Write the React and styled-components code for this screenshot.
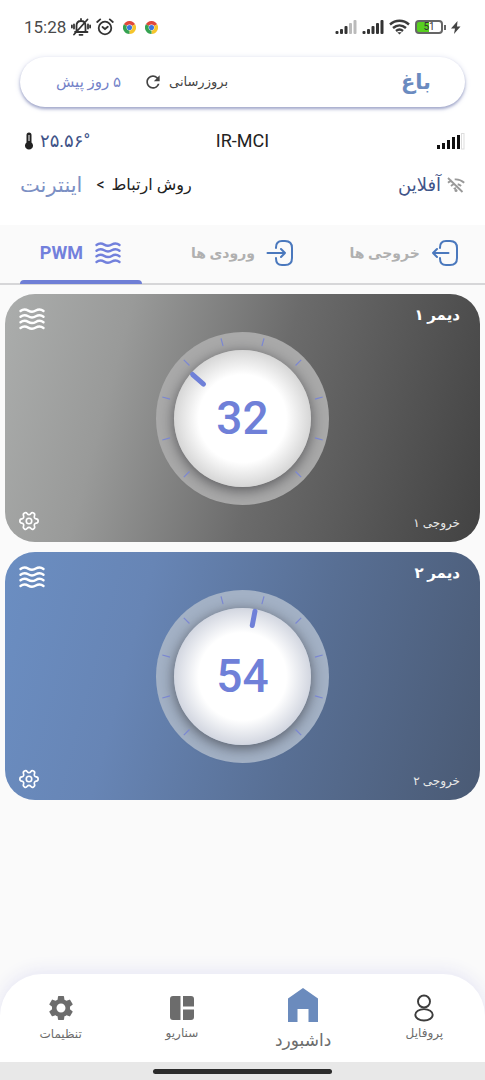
import React, { useState } from "react";
import styled, { createGlobalStyle, css } from "styled-components";
import { MdRefresh, MdSettings } from "react-icons/md";
import { Settings } from "lucide-react";

const GlobalStyle = createGlobalStyle`
  *, *::before, *::after { box-sizing: border-box; }
  body {
    margin: 0;
    background: #fafafa;
    color: #222;
    font-family: Roboto, "DejaVu Sans", sans-serif;
  }
  button { font: inherit; color: inherit; background: none; border: 0; padding: 0; cursor: pointer; }
  a { color: inherit; text-decoration: none; }
  h1, h2, p { margin: 0; font-weight: inherit; }
  svg { display: block; flex: none; }
`;

const Screen = styled.div`
  direction: rtl;
  display: flex;
  flex-direction: column;
  min-height: 100vh;
`;

const Top = styled.header`
  background: #fff;
  padding: 0 20px 30px;
`;

const StatusBar = styled.div`
  direction: ltr;
  display: flex;
  align-items: center;
  justify-content: space-between;
  height: 54px;
  padding: 0 4px;
  color: #4a4a4a;
`;

const StatusGroup = styled.div`
  display: flex;
  align-items: center;
  gap: ${(p) => p.$gap}px;
`;

const Clock = styled.time`
  font-size: 17px;
  line-height: 20px;
`;

const DevicePill = styled.section`
  display: flex;
  align-items: center;
  justify-content: space-between;
  height: 50px;
  margin-top: 3px;
  padding: 0 34px 0 36px;
  border-radius: 25px;
  background: #fff;
  box-shadow: 0 2px 3px #a4aacb, 0 1px 6px #dcdfee;
`;

const DeviceName = styled.h1`
  color: #6b8bc0;
  font-size: 21px;
  line-height: 32px;
  font-weight: 700;
`;

const Update = styled.div`
  display: flex;
  align-items: center;
  gap: 22px;
  line-height: 24px;
`;

const UpdateButton = styled.button`
  display: flex;
  align-items: center;
  gap: 6px;
  font-size: 13px;
  color: #444;
`;

const UpdateAge = styled.span`
  font-size: 15px;
  color: #7482c8;
`;

const InfoRow = styled.div`
  direction: ltr;
  display: grid;
  grid-template-columns: 1fr auto 1fr;
  align-items: center;
  height: ${(p) => p.$height}px;
  font-size: 18px;
  line-height: 20px;
  > :last-child { justify-self: end; }
`;

const Inline = styled.div`
  display: flex;
  align-items: center;
  gap: 6px;
  padding-left: 4px;
  color: #3f5488;
`;

const Method = styled.button`
  direction: rtl;
  justify-self: start;
  display: flex;
  align-items: center;
  gap: 7px;
  font-size: 16px;
  white-space: nowrap;
`;

const MethodValue = styled.strong`
  margin-right: 7px;
  font-size: 21px;
  font-weight: 400;
  color: #7c90c4;
`;

const Tabs = styled.div`
  display: grid;
  grid-template-columns: repeat(3, 1fr);
  height: 60px;
  border-bottom: 2px solid #d6d6d8;
`;

const Tab = styled.button`
  position: relative;
  display: flex;
  align-items: center;
  justify-content: center;
  gap: 11px;
  padding-bottom: 2px;
  font-size: ${(p) => (p.$latin ? 18 : 14)}px;
  line-height: 24px;
  font-weight: 700;
  color: ${(p) => (p.$active ? "#7280dc" : "#b0b0b0")};
  ${(p) =>
    p.$active &&
    css`
      &::after {
        content: "";
        position: absolute;
        left: 20px;
        right: 20px;
        bottom: -1px;
        height: 4px;
        border-radius: 4px 4px 0 0;
        background: #6f7fd6;
      }
    `}
`;

const Cards = styled.main`
  flex: 1;
  display: flex;
  flex-direction: column;
  gap: 10px;
  padding: 9px 5px 20px;
`;

const themes = {
  grey: { card: "#abadac, #999a99 24%, #6b6b6b 55%, #424242", ring: "#a9a9a9", edge: "#d6d6d6" },
  blue: { card: "#6b8ec2, #6785b5 28%, #586f94 62%, #4a5a74", ring: "#a3b1c5", edge: "#d2d6e0" },
};

const Card = styled.article`
  display: grid;
  grid-template-columns: 1fr auto 1fr;
  grid-template-rows: 1fr auto;
  height: 248px;
  padding: 10px 13px;
  border-radius: 30px;
  color: #fff;
  background: linear-gradient(105deg, ${(p) => themes[p.$tone].card});
`;

const CardTitle = styled.h2`
  padding-right: 7px;
  font-size: 15px;
  line-height: 22px;
  font-weight: 700;
`;

const CardOutput = styled.p`
  grid-row: 2;
  grid-column: 1;
  align-self: end;
  padding-right: 7px;
  font-size: 12px;
  line-height: 18px;
  color: #e9e9e9;
`;

const CardKind = styled.span`
  grid-column: 3;
  grid-row: 1;
  justify-self: end;
  padding-top: 1px;
`;

const CardSettings = styled.button`
  grid-column: 3;
  grid-row: 2;
  justify-self: end;
  align-self: end;
`;

const DialBox = styled.div`
  grid-column: 2;
  grid-row: 1 / 3;
  align-self: center;
  position: relative;
  display: grid;
  place-items: center;
  width: 173px;
  height: 173px;
  border-radius: 50%;
  background: ${(p) => themes[p.$tone].ring};
  direction: ltr;
`;

const Knob = styled.div`
  display: grid;
  place-items: center;
  width: 137px;
  height: 137px;
  border-radius: 50%;
  background: radial-gradient(closest-side, #fff 64%, ${(p) => themes[p.$tone].edge} 100%);
  box-shadow: 0 3px 14px rgba(30, 30, 35, 0.6);
`;

const Reading = styled.output`
  font-family: Roboto, sans-serif;
  font-size: 46px;
  line-height: 60px;
  font-weight: 500;
  color: #6f80d8;
`;

const DialMarks = styled.svg`
  position: absolute;
  inset: 0;
`;

const DialRange = styled.input`
  position: absolute;
  inset: 0;
  width: 100%;
  height: 100%;
  margin: 0;
  opacity: 0;
  cursor: pointer;
`;

const BottomNav = styled.nav`
  display: grid;
  grid-template-columns: repeat(4, 1fr);
  height: 88px;
  border-radius: 42px 42px 0 0;
  background: #fff;
  box-shadow: 0 -2px 18px #e4e4f4;
`;

const NavLink = styled.a`
  display: flex;
  flex-direction: column;
  align-items: center;
  justify-content: center;
  gap: ${(p) => (p.$active ? 6 : 2)}px;
  padding-top: ${(p) => (p.$active ? 3 : 0)}px;
  font-size: ${(p) => (p.$active ? 17 : 12)}px;
  line-height: ${(p) => (p.$active ? 24 : 18)}px;
  color: #6c6c6c;
`;

const GestureArea = styled.footer`
  display: flex;
  align-items: center;
  justify-content: center;
  height: 18px;
  background: #e8e8e8;
  z-index: 1;
`;

const GestureBar = styled.span`
  width: 37%;
  height: 5px;
  border-radius: 3px;
  background: #2c2c2c;
`;

const Waves = () => (
  <svg width="28" height="28" viewBox="0 0 28 28" fill="none" stroke="currentColor" strokeWidth="2.4" strokeLinecap="round">
    {[6, 11.7, 17.3, 23].map((y) => (
      <path key={y} d={`M2.5 ${y}c2.6-2 5-2 7.7-.4 2.6 1.6 5 1.6 7.6 0 2.7-1.6 5.1-1.6 7.7.4`} />
    ))}
  </svg>
);

const OutputIcon = () => (
  <svg width="28" height="28" viewBox="0 0 28 28" fill="none" stroke="#4a78bd" strokeWidth="2" strokeLinecap="round" strokeLinejoin="round">
    <path d="M9 9V8.500C9 4 11 2 15 2h4c5 0 7 2.500 7 7v10c0 4.500-2 7-7 7h-4c-4 0-6-2-6-6.500V19M17.500 14H2M6 10l-4 4 4 4" />
  </svg>
);

const InputIcon = () => (
  <svg width="28" height="28" viewBox="0 0 28 28" fill="none" stroke="#4a78bd" strokeWidth="2" strokeLinecap="round" strokeLinejoin="round">
    <path d="M10 9v-.5C10 4 12 2 16 2h3c5 0 7 2.500 7 7v10c0 4.500-2 7-7 7h-3c-4 0-6-2-6-6.500V19M1.500 14H19M15 10l4 4-4 4" />
  </svg>
);

const MutedBell = () => (
  <svg width="20" height="18" viewBox="0 0 20 18" fill="none" stroke="#333" strokeWidth="1.8" strokeLinecap="round">
    <path d="M4 14h12.500M5.500 13V8c0-3 1.800-5 4.500-5s4.500 2 4.500 5v5M10 1v1.500M3 16.500 16.500 1.500M8.500 16.800h3M3 6.500v4M.9 7.500v2M17 6.500v4M19.100 7.500v2" />
  </svg>
);

const Alarm = () => (
  <svg width="18" height="18" viewBox="0 0 18 18" fill="none" stroke="#333" strokeWidth="1.8" strokeLinecap="round">
    <circle cx="9" cy="10" r="6.3" />
    <path d="m1.200 4 3-2.600M16.800 4l-3-2.600M6.500 9l2.500 2 2.800-2.200" />
  </svg>
);

const Chrome = () => (
  <svg width="13" height="13" viewBox="0 0 24 24">
    <path d="M12 12 1.600 6A12 12 0 0 1 22.400 6z" fill="#e0483b" />
    <path d="M12 12 22.400 6A12 12 0 0 1 12 24z" fill="#f5c52c" />
    <path d="M12 12v12A12 12 0 0 1 1.600 6z" fill="#35a251" />
    <circle cx="12" cy="12" r="5.4" fill="#fff" />
    <circle cx="12" cy="12" r="4.7" fill="#3a75e0" />
  </svg>
);

const PhoneSignal = ({ level }) => (
  <svg width="22" height="14" viewBox="0 0 22 14">
    {[3, 5, 8, 11, 14].map((h, i) => (
      <rect key={h} x={i * 4.5 + 0.5} y={14 - h} width="3" height={h} rx="1" fill={i < level ? "#333" : "#bbb"} />
    ))}
  </svg>
);

const Wifi = () => (
  <svg width="21" height="16" viewBox="0 0 21 16" fill="none" stroke="#3c3c3c" strokeWidth="2.4">
    <path d="M1 5.500c5.500-5 13.500-5 19 0M4 9c4-3.500 9-3.500 13 0M7 12c2.200-1.800 4.800-1.800 7 0" />
    <path d="m10.500 15.500-2.200-2.300h4.400z" fill="#3c3c3c" stroke="none" />
  </svg>
);

const Battery = styled.span`
  display: flex;
  align-items: center;
  justify-content: center;
  width: 28px;
  height: 14px;
  border: 2px solid #666;
  border-radius: 4px;
  background: linear-gradient(90deg, #58d020 52%, #fff 52%);
  font-size: 10px;
  line-height: 10px;
  color: #333;
`;

const BatteryTip = styled.span`
  width: 2px;
  height: 5px;
  background: #666;
`;

const Bolt = () => (
  <svg width="10" height="13" viewBox="0 0 10 13">
    <path d="M6.500 0 0 7.500h4L3 13l6.500-7.500H6z" fill="#444" />
  </svg>
);

const Thermometer = () => (
  <svg width="10" height="18" viewBox="0 0 10 18">
    <path d="M2.500 3a2.500 2.500 0 0 1 5 0v7.500a4 4 0 1 1-5 0z" fill="#222" />
    <path d="M5 3v6" stroke="#ccc" strokeWidth="1.3" />
  </svg>
);

const ModemSignal = () => (
  <svg width="28" height="18" viewBox="0 0 28 18">
    {[4, 6, 9, 12, 14].map((h, i) => (
      <rect key={h} x={i * 5} y={17 - h} width="3" height={h} fill="#111" />
    ))}
    <rect x="24.500" y="1.500" width="2.500" height="15.500" fill="#fff" stroke="#ddd" />
  </svg>
);

const Offline = () => (
  <svg width="18" height="16" viewBox="0 0 18 16" fill="none" stroke="#999" strokeWidth="1.9">
    <path d="M1 1l14.500 14M1 5.700c1.200-1 2.400-1.700 3.700-2.200M7.700 2.400c3.500-.3 6.700.8 9.500 3.300M4 9c1-.9 2.100-1.500 3.300-1.800M10.700 7.200c1.300.3 2.400.9 3.400 1.800M6.800 12c.8-.6 1.500-.8 2.300-.8" />
    <circle cx="9" cy="13.5" r="1.5" fill="#999" stroke="none" />
  </svg>
);

const ScenarioIcon = () => (
  <svg width="24" height="28" viewBox="0 0 24 28" fill="currentColor">
    <path d="M3 2h7.500v24H3a3 3 0 0 1-3-3V5a3 3 0 0 1 3-3zM13 2h8a3 3 0 0 1 3 3v7.500H13zM13 15.500h11V23a3 3 0 0 1-3 3h-8z" />
  </svg>
);

const HomeIcon = () => (
  <svg width="32" height="34" viewBox="0 0 32 34">
    <path d="M16 0 31 10.500V34H21.500V21h-11v13H1V10.500z" fill="#6b8bbd" />
  </svg>
);

const ProfileIcon = () => (
  <svg width="20" height="28" viewBox="0 0 20 28" fill="none" stroke="#3c3c3c" strokeWidth="1.9">
    <circle cx="10" cy="7.5" r="6" />
    <ellipse cx="10" cy="20.8" rx="8.7" ry="5.7" />
  </svg>
);

const TICKS = Array.from({ length: 10 }, (_, i) => -135 + i * 30);

function Dial({ tone, initial, label }) {
  const [value, setValue] = useState(initial);
  return (
    <DialBox $tone={tone}>
      <Knob $tone={tone}>
        <Reading>{value}</Reading>
      </Knob>
      <DialMarks viewBox="0 0 173 173" aria-hidden="true">
        {TICKS.map((a) => (
          <line key={a} x1="86.5" x2="86.5" y1="3.5" y2="11.5" stroke="#7b87d2" strokeWidth="1.2" transform={`rotate(${a} 86.5 86.5)`} />
        ))}
        <line x1="86.5" x2="86.5" y1="20" y2="34.5" stroke="#6f80d8" strokeWidth="5" strokeLinecap="round" transform={`rotate(${-135 + value * 2.7} 86.5 86.5)`} />
      </DialMarks>
      <DialRange type="range" min="0" max="100" value={value} aria-label={label} onChange={(e) => setValue(Number(e.target.value))} />
    </DialBox>
  );
}

function DimmerCard({ tone, title, output, value }) {
  return (
    <Card $tone={tone}>
      <CardTitle>{title}</CardTitle>
      <CardOutput>{output}</CardOutput>
      <Dial tone={tone} initial={value} label={title} />
      <CardKind><Waves /></CardKind>
      <CardSettings aria-label="تنظیمات">
        <Settings size={22} strokeWidth={1.8} transform="rotate(90)" />
      </CardSettings>
    </Card>
  );
}

const TABS = [
  { id: "out", label: "خروجی ها", Icon: OutputIcon },
  { id: "in", label: "ورودی ها", Icon: InputIcon },
  { id: "pwm", label: "PWM", Icon: Waves, latin: true },
];

export default function App() {
  const [tab, setTab] = useState("pwm");
  return (
    <Screen lang="fa">
      <GlobalStyle />
      <Top>
        <StatusBar>
          <StatusGroup $gap={5}>
            <Clock>15:28</Clock>
            <MutedBell />
            <StatusGroup $gap={9}>
              <Alarm />
              <Chrome />
              <Chrome />
            </StatusGroup>
          </StatusGroup>
          <StatusGroup $gap={5}>
            <PhoneSignal level={3} />
            <PhoneSignal level={5} />
            <Wifi />
            <StatusGroup $gap={1}>
              <Battery>51</Battery>
              <BatteryTip />
            </StatusGroup>
            <Bolt />
          </StatusGroup>
        </StatusBar>
        <DevicePill>
          <DeviceName>باغ</DeviceName>
          <Update>
            <UpdateButton>بروزرسانی <MdRefresh size={20} /></UpdateButton>
            <UpdateAge>۵ روز پیش</UpdateAge>
          </Update>
        </DevicePill>
        <InfoRow $height={68}>
          <Inline><Thermometer />۲۵.۵۶°</Inline>
          <span>IR-MCI</span>
          <ModemSignal />
        </InfoRow>
        <InfoRow $height={20}>
          <Method>روش ارتباط <span>&gt;</span> <MethodValue>اینترنت</MethodValue></Method>
          <span />
          <Inline>آفلاین<Offline /></Inline>
        </InfoRow>
      </Top>
      <Tabs role="tablist">
        {TABS.map(({ id, label, Icon, latin }) => (
          <Tab key={id} role="tab" aria-selected={tab === id} $active={tab === id} $latin={latin} onClick={() => setTab(id)}>
            <Icon />
            {label}
          </Tab>
        ))}
      </Tabs>
      <Cards>
        <DimmerCard tone="grey" title="دیمر ۱" output="خروجی ۱" value={32} />
        <DimmerCard tone="blue" title="دیمر ۲" output="خروجی ۲" value={54} />
      </Cards>
      <BottomNav>
        <NavLink href="#profile"><ProfileIcon />پروفایل</NavLink>
        <NavLink href="#dashboard" $active><HomeIcon />داشبورد</NavLink>
        <NavLink href="#scenario"><ScenarioIcon />سناریو</NavLink>
        <NavLink href="#settings"><MdSettings size={30} />تنظیمات</NavLink>
      </BottomNav>
      <GestureArea><GestureBar /></GestureArea>
    </Screen>
  );
}
